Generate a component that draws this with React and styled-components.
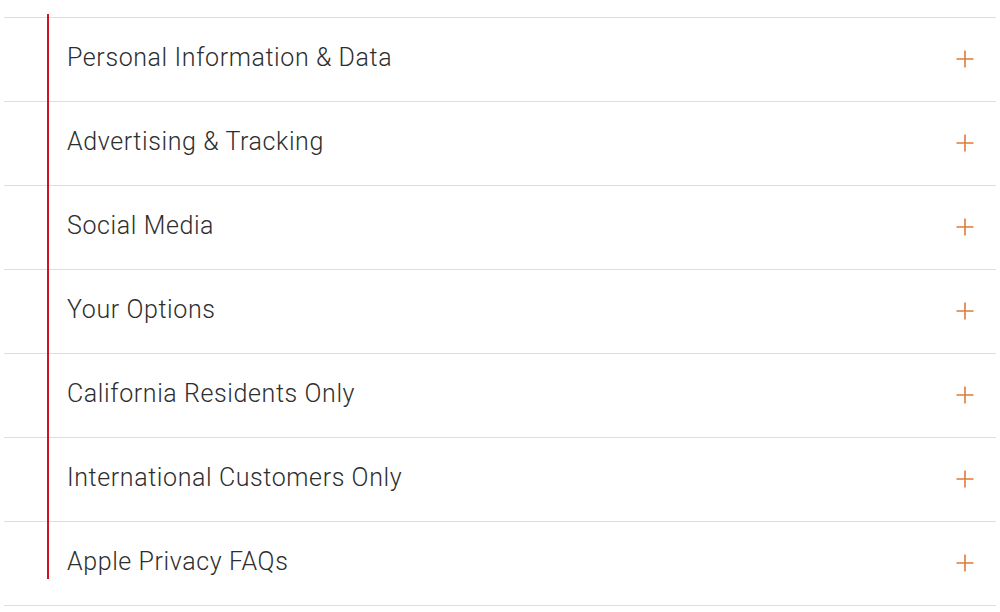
import React from "react";
import styled, { createGlobalStyle } from "styled-components";

const Global = createGlobalStyle`
  html, body { margin: 0; padding: 0; background: #fff; }
  body { font-family: Roboto, "Liberation Sans", sans-serif; }
`;

const Page = styled.div`
  position: relative;
  width: 1000px;
  height: 612px;
  padding: 17px 4px 0 4px;
  box-sizing: border-box;
  background: #fff;
`;

const List = styled.div`
  display: flex;
  flex-direction: column;
  border-bottom: 1px solid #dedede;
`;

const Row = styled.div`
  display: flex;
  align-items: center;
  justify-content: space-between;
  height: 84px;
  box-sizing: border-box;
  border-top: 1px solid #dedede;
  padding: 0 22px 0 63px;
`;

const Title = styled.span`
  font-family: Roboto, "Liberation Sans", sans-serif;
  font-size: 25px;
  font-weight: 300;
  color: #2e2e2e;
  letter-spacing: 0.6px;
  margin-top: -5px;
`;

const Plus = styled.svg`
  width: 18px;
  height: 18px;
  flex: none;
  margin-top: -1px;
`;

const Marker = styled.div`
  position: absolute;
  left: 47px;
  top: 14px;
  width: 2px;
  height: 565px;
  background: #cc1422;
`;

const items = [
  "Personal Information & Data",
  "Advertising & Tracking",
  "Social Media",
  "Your Options",
  "California Residents Only",
  "International Customers Only",
  "Apple Privacy FAQs",
];

export default function App() {
  return (
    <>
      <Global />
      <Page>
        <List>
          {items.map((t) => (
            <Row key={t}>
              <Title>{t}</Title>
              <Plus viewBox="0 0 18 18">
                <path d="M9 0.5V17.5M0.5 9H17.5" stroke="#e07b39" strokeWidth="1.6" fill="none" />
              </Plus>
            </Row>
          ))}
        </List>
        <Marker />
      </Page>
    </>
  );
}
